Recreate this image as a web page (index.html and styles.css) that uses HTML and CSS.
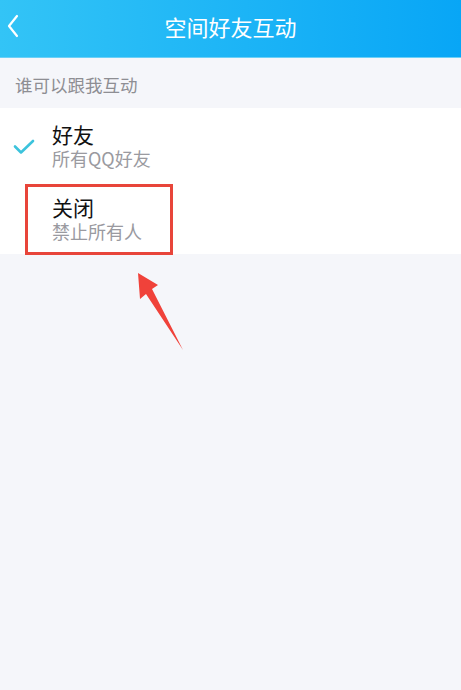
FILE: index.html
```html
<!DOCTYPE html>
<html lang="zh">
<head>
<meta charset="utf-8">
<link rel="stylesheet" href="styles.css">
</head>
<body>
<div class="page">
  <header class="bar">
    <svg class="back" width="14" height="24" viewBox="0 0 14 24"><path d="M11 2 L3 12 L11 22" fill="none" stroke="#fff" stroke-width="2.2" stroke-linecap="round" stroke-linejoin="round"/></svg>
    <div class="title">空间好友互动</div>
  </header>
  <div class="section">谁可以跟我互动</div>
  <div class="list">
    <div class="item">
      <svg class="check" width="22" height="16" viewBox="0 0 22 16"><path d="M2 7.5 L8 13.5 L20 2" fill="none" stroke="#3cc3dc" stroke-width="2.6" stroke-linecap="round" stroke-linejoin="round"/></svg>
      <div class="name">好友</div>
      <div class="sub">所有QQ好友</div>
    </div>
    <div class="item">
      <div class="name">关闭</div>
      <div class="sub">禁止所有人</div>
      <div class="mark"></div>
    </div>
  </div>
  <svg class="arrow" width="461" height="690" viewBox="0 0 461 690"><polygon points="138,273 158,285 152,289 183,350 146,294 140,299" fill="#f0423a"/></svg>
</div>
</body>
</html>
```
FILE: styles.css
```css
html, body { margin: 0; padding: 0; }
body { font-family: "Noto Sans CJK SC", "Noto Sans", sans-serif; background: #f5f6fa; }
.page { position: relative; width: 461px; height: 690px; overflow: hidden; background: #f5f6fa; }
.bar { position: relative; height: 57px; background: linear-gradient(to right, #33c4f6, #08a6f6); border-bottom: 1px solid #6cd0f7; display: flex; align-items: center; justify-content: center; }
.back { position: absolute; left: 6px; top: 14px; }
.title { color: #fff; font-size: 22px; line-height: 30px; margin-top: -6px; }
.section { height: 50px; box-sizing: border-box; padding-left: 15px; display: flex; align-items: center; font-size: 17.5px; color: #8e8e93; padding-top: 2px; }
.list { background: #fff; }
.item { position: relative; height: 73px; box-sizing: border-box; padding: 15.5px 0 0 52px; }
.name { font-size: 21px; line-height: 21px; color: #111; }
.sub { font-size: 18px; line-height: 18px; margin-top: 4.5px; color: #9a9aa0; }
.check { position: absolute; left: 13px; top: 31px; }
.mark { position: absolute; left: 25px; top: 3px; width: 148px; height: 71px; box-sizing: border-box; border: 3px solid #e8453a; }
.arrow { position: absolute; left: 0; top: 0; pointer-events: none; }
```
